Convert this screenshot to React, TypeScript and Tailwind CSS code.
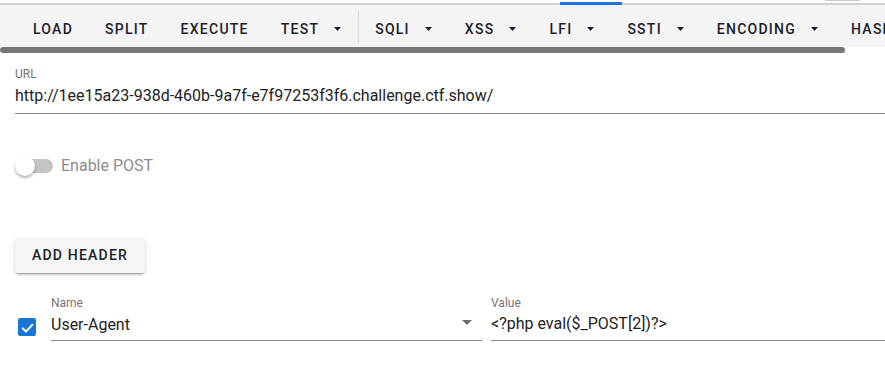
const tools: { label: string; menu?: boolean; divider?: boolean }[] = [
  { label: "Load" },
  { label: "Split" },
  { label: "Execute" },
  { label: "Test", menu: true, divider: true },
  { label: "SQLI", menu: true },
  { label: "XSS", menu: true },
  { label: "LFI", menu: true },
  { label: "SSTI", menu: true },
  { label: "Encoding", menu: true },
  { label: "Hashing", menu: true },
];

function Caret({ className = "", w = 10, h = 5 }: { className?: string; w?: number; h?: number }) {
  return (
    <svg width={w} height={h} viewBox="0 0 10 5" preserveAspectRatio="none" className={className}>
      <path d="M0 0 L10 0 L5 5 Z" fill="currentColor" />
    </svg>
  );
}

function Toolbar() {
  return (
    <div className="relative">
      <div className="h-[3px] bg-white" />
      <div className="relative h-[2px] bg-[#d0d1d5]">
        <div className="absolute left-[560px] top-[-1px] h-[3px] w-[62px] bg-[#1a73e8]" />
      </div>
      <div className="absolute left-[825px] top-0 h-[1px] w-[35px] bg-[#c8c9cc]" />
      <div className="flex h-[42px] items-center overflow-hidden whitespace-nowrap bg-[#f4f4f4] pl-[17px] pt-[6px]">
        {tools.map((t) => (
          <div key={t.label} className="flex shrink-0 items-center">
            <button className="flex h-9 min-w-[64px] items-center justify-center px-4 text-[14px] font-medium uppercase tracking-[1.25px] text-[#1d1d2b]">
              {t.label}
              {t.menu && <Caret w={7} h={4} className="ml-[15px] mr-[1px] text-[#1d1d2b]" />}
            </button>
            {t.divider && <div className="mt-[-4px] h-[32px] w-[1px] bg-[#dcdcdc]" />}
          </div>
        ))}
      </div>
      <div className="h-[6px] bg-white">
        <div className="h-[6px] w-[845px] rounded-full bg-[#777777]" />
      </div>
    </div>
  );
}

export default function App() {
  return (
    <div className="h-[371px] w-[885px] overflow-hidden bg-white font-['Roboto',sans-serif]">
      <Toolbar />
      <div className="pl-[15px]">
        <div className="mt-[14px]">
          <div className="text-[12px] leading-[14px] text-[#757575]">URL</div>
          <div className="mt-[5px] border-b border-[#8a8a8a] pb-[7px] text-[16px] leading-[20px] text-[#222222]">
            http://1ee15a23-938d-460b-9a7f-e7f97253f3f6.challenge.ctf.show/
          </div>
        </div>

        <div className="mt-[40px] flex items-center">
          <div className="relative h-[20px] w-[38px]">
            <div className="absolute left-[2px] top-[3px] h-[14px] w-[36px] rounded-full bg-[#c4c4c4]" />
            <div className="absolute left-0 top-0 h-[20px] w-[20px] rounded-full bg-white shadow-[0_2px_3px_rgba(0,0,0,0.3)]" />
          </div>
          <span className="ml-[8px] text-[16px] text-[#8c8c8c]">Enable POST</span>
        </div>

        <button className="mt-[60px] h-[35px] rounded-[4px] bg-[#f5f5f5] px-[17px] text-[14px] font-medium uppercase tracking-[1.2px] text-[#222222] shadow-[0_3px_1px_-2px_rgba(0,0,0,0.2),0_2px_2px_0_rgba(0,0,0,0.14),0_1px_5px_0_rgba(0,0,0,0.12)]">
          Add header
        </button>

        <div className="mt-[23px] flex items-end">
          <div className="mb-[5px] ml-[3px] mr-[15px] flex h-[18px] w-[18px] items-center justify-center rounded-[2px] bg-[#1976d2]">
            <svg width="15" height="15" viewBox="0 0 24 24">
              <path d="M3.5 12.5 L9.5 18.5 L20.5 6.5" fill="none" stroke="white" strokeWidth="3.2" />
            </svg>
          </div>
          <div className="w-[431px]">
            <div className="text-[12px] leading-[14px] text-[#757575]">Name</div>
            <div className="mt-[5px] flex items-center border-b border-[#8a8a8a] pb-[5px]">
              <span className="flex-1 text-[16px] leading-[20px] text-[#222222]">User-Agent</span>
              <Caret className="mb-[6px] mr-[10px] text-[#6f6f6f]" />
            </div>
          </div>
          <div className="ml-[9px] flex-1">
            <div className="text-[12px] leading-[14px] text-[#757575]">Value</div>
            <div className="mt-[4px] border-b border-[#8a8a8a] pb-[6px] text-[16px] leading-[20px] text-[#222222]">
              {"<?php eval($_POST[2])?>"}
            </div>
          </div>
        </div>
      </div>
    </div>
  );
}
